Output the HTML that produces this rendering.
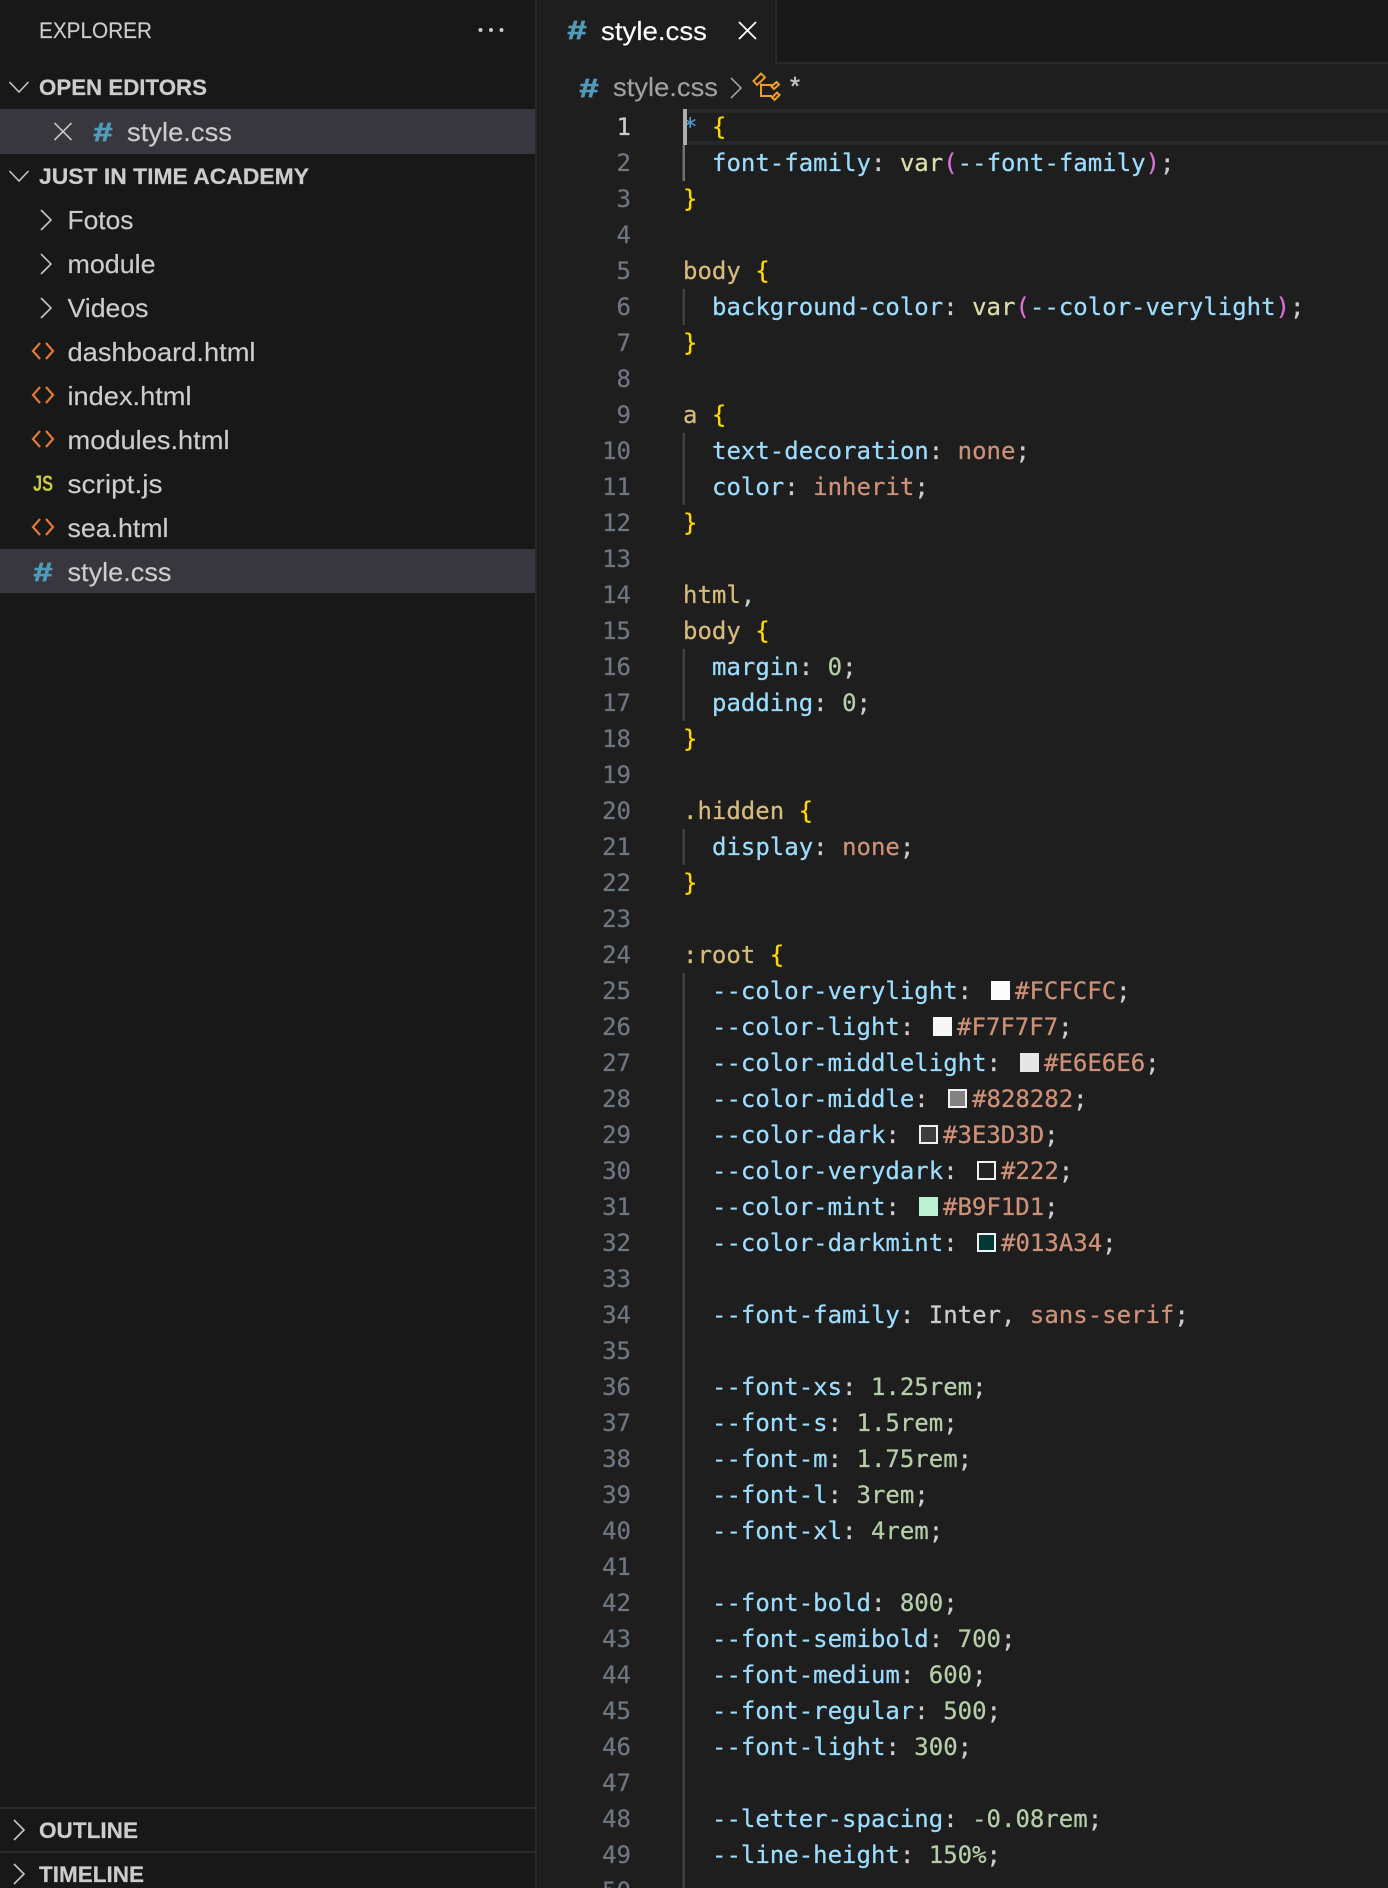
<!DOCTYPE html>
<html><head><meta charset="utf-8"><title>style.css</title>
<style>
html,body{margin:0;padding:0;background:#1e1e1e;width:1388px;height:1888px;overflow:hidden}
svg{display:block}
text{white-space:pre}
.s{font-family:"Liberation Sans",sans-serif;font-size:26px;fill:#cccccc;stroke:#cccccc;stroke-width:.15px}
.h{font-family:"Liberation Sans",sans-serif;font-size:22.5px;font-weight:700;fill:#cccccc;stroke:#cccccc;stroke-width:.2px}
.c text,.n text{font-family:"DejaVu Sans Mono",monospace;font-size:24px;stroke-width:.25px}
.n text{fill:#6e7681;stroke:#6e7681;text-anchor:end}
.c text{fill:#cccccc;stroke:#cccccc}
.c .p{fill:#9cdcfe;stroke:#9cdcfe}.c .t{fill:#d7ba7d;stroke:#d7ba7d}.c .b{fill:#ffd700;stroke:#ffd700}.c .v{fill:#ce9178;stroke:#ce9178}.c .u{fill:#b5cea8;stroke:#b5cea8}.c .f{fill:#dcdcaa;stroke:#dcdcaa}.c .m{fill:#da70d6;stroke:#da70d6}.c .k{fill:#569cd6;stroke:#569cd6}
.i{fill:none;stroke:#c5c5c5;stroke-width:1.6}
.w{stroke:#f0f0f0;stroke-width:2}
.hash{font-family:"Liberation Sans",sans-serif;font-size:26px;font-weight:700;font-style:italic;fill:#519aba;stroke:#519aba;stroke-width:.8px}
</style></head><body>
<svg xmlns="http://www.w3.org/2000/svg" width="1388" height="1888" viewBox="0 0 1388 1888">
<rect width="1388" height="1888" fill="#1e1e1e"/>
<!-- sidebar -->
<rect width="535" height="1888" fill="#181818"/>
<rect x="535" width="2" height="1888" fill="#292929"/>
<rect y="109" width="535" height="45" fill="#37373d"/>
<rect y="549" width="535" height="44" fill="#37373d"/>
<rect y="1807" width="535" height="2" fill="#292929"/>
<rect y="1851" width="535" height="2" fill="#292929"/>
<text class="s" x="39" y="38" style="font-size:22.5px" textLength="113" lengthAdjust="spacingAndGlyphs">EXPLORER</text>
<g fill="#cccccc"><circle cx="480.500" cy="30" r="2"/><circle cx="491" cy="30" r="2"/><circle cx="501.500" cy="30" r="2"/></g>
<path class="i" d="M9.500 82l9.500 10 9.500-10M9.500 171l9.500 10 9.500-10"/>
<text class="h" x="39" y="95" textLength="168" lengthAdjust="spacingAndGlyphs">OPEN EDITORS</text>
<path class="i" d="M54.500 123l17 17M71.500 123l-17 17"/>
<text class="hash" x="93" y="141" textLength="19" lengthAdjust="spacingAndGlyphs">#</text>
<text class="s" x="127" y="141" textLength="105" lengthAdjust="spacingAndGlyphs">style.css</text>
<text class="h" x="39" y="184" textLength="270" lengthAdjust="spacingAndGlyphs">JUST IN TIME ACADEMY</text>
<path class="i" d="M41 210l10 10-10 10M41 254l10 10-10 10M41 298l10 10-10 10"/>
<text class="s" x="67.500" y="229" textLength="66" lengthAdjust="spacingAndGlyphs">Fotos</text>
<text class="s" x="67.500" y="273" textLength="88" lengthAdjust="spacingAndGlyphs">module</text>
<text class="s" x="67.500" y="317" textLength="81" lengthAdjust="spacingAndGlyphs">Videos</text>
<g fill="none" stroke="#e37933" stroke-width="2.200">
<path d="M40 343l-7 8 7 8M46 343l7 8-7 8"/>
<path d="M40 387l-7 8 7 8M46 387l7 8-7 8"/>
<path d="M40 431l-7 8 7 8M46 431l7 8-7 8"/>
<path d="M40 519l-7 8 7 8M46 519l7 8-7 8"/>
</g>
<text class="s" x="67.500" y="361" textLength="188" lengthAdjust="spacingAndGlyphs">dashboard.html</text>
<text class="s" x="67.500" y="405" textLength="124" lengthAdjust="spacingAndGlyphs">index.html</text>
<text class="s" x="67.500" y="449" textLength="162" lengthAdjust="spacingAndGlyphs">modules.html</text>
<text x="33" y="491" font-family="Liberation Sans,sans-serif" font-size="22" font-weight="700" fill="#cbcb41" textLength="20" lengthAdjust="spacingAndGlyphs">JS</text>
<text class="s" x="67.500" y="493" textLength="95" lengthAdjust="spacingAndGlyphs">script.js</text>
<text class="s" x="67.500" y="537" textLength="101" lengthAdjust="spacingAndGlyphs">sea.html</text>
<text class="hash" x="33" y="581" textLength="19" lengthAdjust="spacingAndGlyphs">#</text>
<text class="s" x="67.500" y="581" textLength="104" lengthAdjust="spacingAndGlyphs">style.css</text>
<path class="i" d="M14 1820l10 10-10 10M14 1864l10 10-10 10"/>
<text class="h" x="39" y="1838" textLength="99" lengthAdjust="spacingAndGlyphs">OUTLINE</text>
<text class="h" x="39" y="1882" textLength="105" lengthAdjust="spacingAndGlyphs">TIMELINE</text>
<!-- tab bar -->
<rect x="776" width="612" height="63" fill="#181818"/>
<rect x="776" y="62" width="612" height="2" fill="#292929"/>
<rect x="775" width="2" height="64" fill="#292929"/>
<text class="hash" x="567" y="39" textLength="19" lengthAdjust="spacingAndGlyphs">#</text>
<text class="s" x="601" y="40" style="fill:#ffffff;stroke:#ffffff" textLength="106" lengthAdjust="spacingAndGlyphs">style.css</text>
<path fill="none" stroke="#ffffff" stroke-width="1.800" d="M739 22l17 17M756 22l-17 17"/>
<text class="hash" x="579" y="97" textLength="19" lengthAdjust="spacingAndGlyphs">#</text>
<text class="s" x="613" y="96" style="fill:#a0a0a0;stroke:#a0a0a0" textLength="105" lengthAdjust="spacingAndGlyphs">style.css</text>
<path fill="none" stroke="#a0a0a0" stroke-width="1.600" d="M731 78l10 10-10 10"/>
<g fill="none" stroke="#ee9d28" stroke-width="2">
<path d="M761 73.500l4 4-8 7.500-3.500-4zM776.500 82l2.500 2.500-5 4.500-2.500-2.500zM777 92.500l2.500 2.500-5 5-2.500-2.500zM761 83.500V96h11M761 85h11.500"/>
</g>
<text x="790" y="95" font-family="Liberation Sans,sans-serif" font-size="26" fill="#c0c0c0" stroke="#c0c0c0" stroke-width=".5" textLength="10" lengthAdjust="spacingAndGlyphs">*</text>
<!-- current line -->
<rect x="687" y="109" width="701" height="4" fill="#272727"/>
<rect x="687" y="141" width="701" height="4" fill="#272727"/>
<!-- guides -->
<g fill="#404040">
<rect x="682.500" y="145" width="2.500" height="36" fill="#707070"/>
<rect x="682.500" y="289" width="2.500" height="36"/>
<rect x="682.500" y="433" width="2.500" height="72"/>
<rect x="682.500" y="649" width="2.500" height="72"/>
<rect x="682.500" y="829" width="2.500" height="36"/>
<rect x="682.500" y="973" width="2.500" height="915"/>
</g>
<!-- line numbers -->
<g class="n">
<text x="631" y="135" style="fill:#cccccc;stroke:#cccccc">1</text><text x="631" y="171">2</text><text x="631" y="207">3</text><text x="631" y="243">4</text><text x="631" y="279">5</text><text x="631" y="315">6</text><text x="631" y="351">7</text><text x="631" y="387">8</text><text x="631" y="423">9</text><text x="631" y="459">10</text><text x="631" y="495">11</text><text x="631" y="531">12</text><text x="631" y="567">13</text><text x="631" y="603">14</text><text x="631" y="639">15</text><text x="631" y="675">16</text><text x="631" y="711">17</text><text x="631" y="747">18</text><text x="631" y="783">19</text><text x="631" y="819">20</text><text x="631" y="855">21</text><text x="631" y="891">22</text><text x="631" y="927">23</text><text x="631" y="963">24</text><text x="631" y="999">25</text><text x="631" y="1035">26</text><text x="631" y="1071">27</text><text x="631" y="1107">28</text><text x="631" y="1143">29</text><text x="631" y="1179">30</text><text x="631" y="1215">31</text><text x="631" y="1251">32</text><text x="631" y="1287">33</text><text x="631" y="1323">34</text><text x="631" y="1359">35</text><text x="631" y="1395">36</text><text x="631" y="1431">37</text><text x="631" y="1467">38</text><text x="631" y="1503">39</text><text x="631" y="1539">40</text><text x="631" y="1575">41</text><text x="631" y="1611">42</text><text x="631" y="1647">43</text><text x="631" y="1683">44</text><text x="631" y="1719">45</text><text x="631" y="1755">46</text><text x="631" y="1791">47</text><text x="631" y="1827">48</text><text x="631" y="1863">49</text><text x="631" y="1899">50</text>
</g>
<!-- code -->
<g class="c">
<text x="683" y="135"><tspan class="k">*</tspan> <tspan class="b">{</tspan></text>
<text x="712" y="171"><tspan class="p">font-family</tspan>: <tspan class="f">var</tspan><tspan class="m">(</tspan><tspan class="p">--font-family</tspan><tspan class="m">)</tspan>;</text>
<text x="683" y="207" class="b">}</text>
<text x="683" y="279"><tspan class="t">body</tspan> <tspan class="b">{</tspan></text>
<text x="712" y="315"><tspan class="p">background-color</tspan>: <tspan class="f">var</tspan><tspan class="m">(</tspan><tspan class="p">--color-verylight</tspan><tspan class="m">)</tspan>;</text>
<text x="683" y="351" class="b">}</text>
<text x="683" y="423"><tspan class="t">a</tspan> <tspan class="b">{</tspan></text>
<text x="712" y="459"><tspan class="p">text-decoration</tspan>: <tspan class="v">none</tspan>;</text>
<text x="712" y="495"><tspan class="p">color</tspan>: <tspan class="v">inherit</tspan>;</text>
<text x="683" y="531" class="b">}</text>
<text x="683" y="603"><tspan class="t">html</tspan>,</text>
<text x="683" y="639"><tspan class="t">body</tspan> <tspan class="b">{</tspan></text>
<text x="712" y="675"><tspan class="p">margin</tspan>: <tspan class="u">0</tspan>;</text>
<text x="712" y="711"><tspan class="p">padding</tspan>: <tspan class="u">0</tspan>;</text>
<text x="683" y="747" class="b">}</text>
<text x="683" y="819"><tspan class="t">.hidden</tspan> <tspan class="b">{</tspan></text>
<text x="712" y="855"><tspan class="p">display</tspan>: <tspan class="v">none</tspan>;</text>
<text x="683" y="891" class="b">}</text>
<text x="683" y="963"><tspan class="t">:root</tspan> <tspan class="b">{</tspan></text>

<text x="712" y="999"><tspan class="p">--color-verylight</tspan>:</text>
<rect x="991" y="981" width="19" height="19" fill="#fcfcfc"/>
<text x="1015" y="999"><tspan class="v">#FCFCFC</tspan>;</text>

<text x="712" y="1035"><tspan class="p">--color-light</tspan>:</text>
<rect x="933" y="1017" width="19" height="19" fill="#f7f7f7"/>
<text x="957" y="1035"><tspan class="v">#F7F7F7</tspan>;</text>

<text x="712" y="1071"><tspan class="p">--color-middlelight</tspan>:</text>
<rect x="1020" y="1053" width="19" height="19" fill="#e6e6e6"/>
<text x="1044" y="1071"><tspan class="v">#E6E6E6</tspan>;</text>

<text x="712" y="1107"><tspan class="p">--color-middle</tspan>:</text>
<rect x="949" y="1090" width="17" height="17" fill="#828282" class="w"/>
<text x="972" y="1107"><tspan class="v">#828282</tspan>;</text>

<text x="712" y="1143"><tspan class="p">--color-dark</tspan>:</text>
<rect x="920" y="1126" width="17" height="17" fill="#3e3d3d" class="w"/>
<text x="943" y="1143"><tspan class="v">#3E3D3D</tspan>;</text>

<text x="712" y="1179"><tspan class="p">--color-verydark</tspan>:</text>
<rect x="978" y="1162" width="17" height="17" fill="#222222" class="w"/>
<text x="1001" y="1179"><tspan class="v">#222</tspan>;</text>

<text x="712" y="1215"><tspan class="p">--color-mint</tspan>:</text>
<rect x="919" y="1197" width="19" height="19" fill="#b9f1d1"/>
<text x="943" y="1215"><tspan class="v">#B9F1D1</tspan>;</text>

<text x="712" y="1251"><tspan class="p">--color-darkmint</tspan>:</text>
<rect x="978" y="1234" width="17" height="17" fill="#013a34" class="w"/>
<text x="1001" y="1251"><tspan class="v">#013A34</tspan>;</text>

<text x="712" y="1323"><tspan class="p">--font-family</tspan>: Inter, <tspan class="v">sans-serif</tspan>;</text>
<text x="712" y="1395"><tspan class="p">--font-xs</tspan>: <tspan class="u">1.25rem</tspan>;</text>
<text x="712" y="1431"><tspan class="p">--font-s</tspan>: <tspan class="u">1.5rem</tspan>;</text>
<text x="712" y="1467"><tspan class="p">--font-m</tspan>: <tspan class="u">1.75rem</tspan>;</text>
<text x="712" y="1503"><tspan class="p">--font-l</tspan>: <tspan class="u">3rem</tspan>;</text>
<text x="712" y="1539"><tspan class="p">--font-xl</tspan>: <tspan class="u">4rem</tspan>;</text>
<text x="712" y="1611"><tspan class="p">--font-bold</tspan>: <tspan class="u">800</tspan>;</text>
<text x="712" y="1647"><tspan class="p">--font-semibold</tspan>: <tspan class="u">700</tspan>;</text>
<text x="712" y="1683"><tspan class="p">--font-medium</tspan>: <tspan class="u">600</tspan>;</text>
<text x="712" y="1719"><tspan class="p">--font-regular</tspan>: <tspan class="u">500</tspan>;</text>
<text x="712" y="1755"><tspan class="p">--font-light</tspan>: <tspan class="u">300</tspan>;</text>
<text x="712" y="1827"><tspan class="p">--letter-spacing</tspan>: <tspan class="u">-0.08rem</tspan>;</text>
<text x="712" y="1863"><tspan class="p">--line-height</tspan>: <tspan class="u">150%</tspan>;</text>
</g>
<!-- cursor -->
<rect x="683" y="109" width="4" height="36" fill="#aeafad"/>
</svg>
</body></html>
